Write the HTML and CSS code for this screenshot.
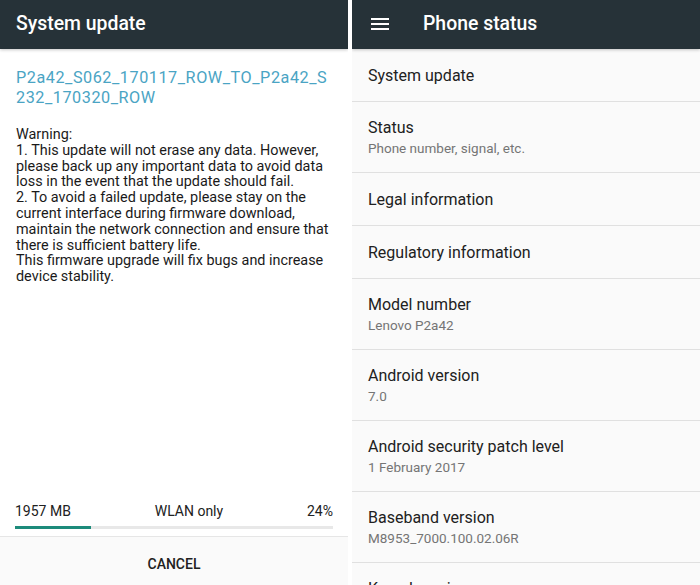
FILE: index.html
```html
<!DOCTYPE html>
<html>
<head>
<meta charset="utf-8">
<link rel="stylesheet" href="styles.css">
</head>
<body>
<div class="screen">
  <section class="panel left">
    <header class="appbar"><span class="appbar-title">System update</span></header>
    <div class="update-body">
      <p class="filename">P2a42_S062_170117_ROW_TO_P2a42_S232_170320_ROW</p>
      <p class="notes">Warning:<br>1. This update will not erase any data. However, please back up any important data to avoid data loss in the event that the update should fail.<br>2. To avoid a failed update, please stay on the current interface during firmware download, maintain the network connection and ensure that there is sufficient battery life.<br>This firmware upgrade will fix bugs and increase device stability.</p>
    </div>
    <div class="progress-area">
      <div class="progress-info">
        <span>1957 MB</span>
        <span>WLAN only</span>
        <span>24%</span>
      </div>
      <div class="progress-track"><div class="progress-fill" style="width:24%"></div></div>
    </div>
    <div class="action-bar"><span class="action">CANCEL</span></div>
  </section>
  <section class="panel right">
    <header class="appbar">
      <svg class="menu-icon" width="24" height="24" viewBox="0 0 24 24"><path fill="#fff" d="M3 18h18v-2H3v2zm0-5h18v-2H3v2zm0-7v2h18V6H3z"/></svg>
      <span class="appbar-title">Phone status</span>
    </header>
    <ul class="list">
      <li class="row single"><div class="title">System update</div></li>
      <li class="row"><div class="title">Status</div><div class="sub">Phone number, signal, etc.</div></li>
      <li class="row single"><div class="title">Legal information</div></li>
      <li class="row single"><div class="title">Regulatory information</div></li>
      <li class="row"><div class="title">Model number</div><div class="sub">Lenovo P2a42</div></li>
      <li class="row"><div class="title">Android version</div><div class="sub">7.0</div></li>
      <li class="row"><div class="title">Android security patch level</div><div class="sub">1 February 2017</div></li>
      <li class="row"><div class="title">Baseband version</div><div class="sub">M8953_7000.100.02.06R</div></li>
      <li class="row"><div class="title">Kernel version</div><div class="sub">3.18.31</div></li>
    </ul>
  </section>
</div>
</body>
</html>
```

FILE: styles.css
```css
* { box-sizing: border-box; }
html, body { margin: 0; padding: 0; background: #fff; }
body {
  width: 700px;
  height: 585px;
  overflow: hidden;
  font-family: Roboto, "Liberation Sans", Arial, sans-serif;
  color: #212121;
}
.screen {
  display: flex;
  gap: 4px;
  height: 585px;
}
.panel {
  width: 348px;
  height: 585px;
  display: flex;
  flex-direction: column;
  overflow: hidden;
}
.left { background: #fff; }
.right { background: #fafafa; }
.appbar {
  height: 49px;
  flex: none;
  background: #263238;
  color: #fff;
  display: flex;
  align-items: center;
  padding: 0 0 2px 16px;
  box-shadow: 0 1px 3px rgba(0,0,0,0.22);
  position: relative;
  z-index: 1;
}
.appbar-title {
  font-size: 19.4px;
  font-weight: 500;
}
.menu-icon { flex: none; margin-right: 31px; }

.update-body {
  flex: 1;
  padding: 19px 16px 0 16px;
}
.filename {
  margin: 0;
  font-size: 16.2px;
  line-height: 20px;
  letter-spacing: 0.55px;
  color: #4aa4c4;
  word-break: break-all;
  width: 316px;
}
.notes {
  margin: 19px 0 0 0;
  font-size: 14.4px;
  line-height: 15.8px;
  color: #1a1a1a;
}
.progress-area {
  flex: none;
  padding: 0 15px 7px 15px;
  border-bottom: 1px solid #e6e6e6;
}
.progress-info {
  display: flex;
  justify-content: space-between;
  font-size: 14px;
  line-height: 16px;
  color: #212121;
}
.progress-track {
  margin-top: 7px;
  height: 3px;
  background: #e8e8e8;
}
.progress-fill {
  height: 3px;
  background: #1d8b7b;
}
.action-bar {
  flex: none;
  height: 48px;
  background: #fafafa;
  display: flex;
  align-items: center;
  justify-content: center;
  padding-top: 6px;
}
.action {
  font-size: 14px;
  font-weight: 500;
  color: #212121;
}

.list {
  list-style: none;
  margin: 0;
  padding: 0;
}
.row {
  padding: 16px 16px 14px 16px;
  border-bottom: 1px solid #e0e0e0;
}
.row.single { padding: 17px 16px 15px 16px; }
.title {
  font-size: 16px;
  line-height: 20px;
  color: #212121;
}
.sub {
  font-size: 13.5px;
  line-height: 20px;
  color: #757575;
}
```
